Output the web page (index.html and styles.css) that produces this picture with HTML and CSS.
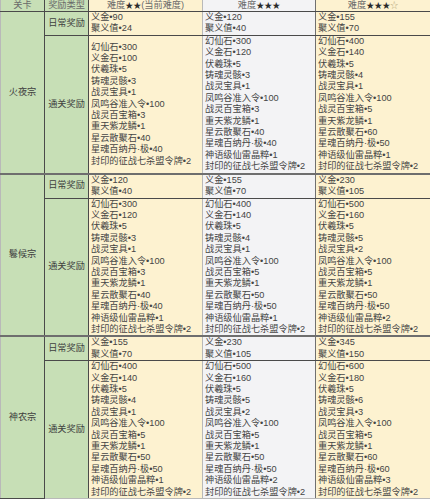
FILE: index.html
```html
<!DOCTYPE html>
<html lang="zh-CN">
<head>
<meta charset="utf-8">
<title>奖励表</title>
<link rel="stylesheet" href="styles.css">
</head>
<body>
<table class="sheet">
  <colgroup>
    <col class="c1"><col class="c2"><col class="c3"><col class="c4"><col class="c5">
  </colgroup>
  <thead>
    <tr class="head">
      <th class="g">关卡</th>
      <th class="g">奖励类型</th>
      <th class="y">难度<span class="st">★★</span>(当前难度)</th>
      <th class="w">难度<span class="st">★★★</span></th>
      <th class="y">难度<span class="st">★★★</span><span class="st2">☆</span></th>
    </tr>
  </thead>
  <tbody>
    <tr class="daily sec">
      <td class="g name" rowspan="2">火夜宗</td>
      <td class="g type">日常奖励</td>
      <td class="y">义金•90<br>聚义值•24</td>
      <td class="w">义金•120<br>聚义值•40</td>
      <td class="y">义金•155<br>聚义值•70</td>
    </tr>
    <tr class="clear">
      <td class="g type">通关奖励</td>
      <td class="y">幻仙石•300<br>义金石•100<br>伏羲珠•5<br>铸魂灵骸•3<br>战灵宝具•1<br>凤鸣谷准入令•100<br>战灵百宝箱•3<br>重天紫龙鳞•1<br>星云散聚石•40<br>星魂百纳丹·极•40<br>封印的征战七杀盟令牌•2</td>
      <td class="w">幻仙石•300<br>义金石•120<br>伏羲珠•5<br>铸魂灵骸•3<br>战灵宝具•1<br>凤鸣谷准入令•100<br>战灵百宝箱•3<br>重天紫龙鳞•1<br>星云散聚石•40<br>星魂百纳丹·极•40<br>神语级仙雷晶粹•1<br>封印的征战七杀盟令牌•2</td>
      <td class="y">幻仙石•400<br>义金石•140<br>伏羲珠•5<br>铸魂灵骸•4<br>战灵宝具•1<br>凤鸣谷准入令•100<br>战灵百宝箱•5<br>重天紫龙鳞•1<br>星云散聚石•60<br>星魂百纳丹·极•50<br>神语级仙雷晶粹•1<br>封印的征战七杀盟令牌•2</td>
    </tr>
    <tr class="daily sec">
      <td class="g name" rowspan="2">鬈候宗</td>
      <td class="g type">日常奖励</td>
      <td class="y">义金•120<br>聚义值•40</td>
      <td class="w">义金•155<br>聚义值•70</td>
      <td class="y">义金•230<br>聚义值•105</td>
    </tr>
    <tr class="clear">
      <td class="g type">通关奖励</td>
      <td class="y">幻仙石•300<br>义金石•120<br>伏羲珠•5<br>铸魂灵骸•3<br>战灵宝具•1<br>凤鸣谷准入令•100<br>战灵百宝箱•3<br>重天紫龙鳞•1<br>星云散聚石•40<br>星魂百纳丹·极•40<br>神语级仙雷晶粹•1<br>封印的征战七杀盟令牌•2</td>
      <td class="w">幻仙石•400<br>义金石•140<br>伏羲珠•5<br>铸魂灵骸•4<br>战灵宝具•1<br>凤鸣谷准入令•100<br>战灵百宝箱•5<br>重天紫龙鳞•1<br>星云散聚石•50<br>星魂百纳丹·极•50<br>神语级仙雷晶粹•1<br>封印的征战七杀盟令牌•2</td>
      <td class="y">幻仙石•500<br>义金石•160<br>伏羲珠•5<br>铸魂灵骸•5<br>战灵宝具•2<br>凤鸣谷准入令•100<br>战灵百宝箱•5<br>重天紫龙鳞•1<br>星云散聚石•50<br>星魂百纳丹·极•50<br>神语级仙雷晶粹•2<br>封印的征战七杀盟令牌•2</td>
    </tr>
    <tr class="daily sec">
      <td class="g name" rowspan="2">神农宗</td>
      <td class="g type">日常奖励</td>
      <td class="y">义金•155<br>聚义值•70</td>
      <td class="w">义金•230<br>聚义值•105</td>
      <td class="y">义金•345<br>聚义值•150</td>
    </tr>
    <tr class="clear">
      <td class="g type">通关奖励</td>
      <td class="y">幻仙石•400<br>义金石•140<br>伏羲珠•5<br>铸魂灵骸•4<br>战灵宝具•1<br>凤鸣谷准入令•100<br>战灵百宝箱•5<br>重天紫龙鳞•1<br>星云散聚石•50<br>星魂百纳丹·极•50<br>神语级仙雷晶粹•1<br>封印的征战七杀盟令牌•2</td>
      <td class="w">幻仙石•500<br>义金石•160<br>伏羲珠•5<br>铸魂灵骸•5<br>战灵宝具•2<br>凤鸣谷准入令•100<br>战灵百宝箱•5<br>重天紫龙鳞•1<br>星云散聚石•50<br>星魂百纳丹·极•50<br>神语级仙雷晶粹•2<br>封印的征战七杀盟令牌•2</td>
      <td class="y">幻仙石•600<br>义金石•180<br>伏羲珠•5<br>铸魂灵骸•6<br>战灵宝具•3<br>凤鸣谷准入令•100<br>战灵百宝箱•5<br>重天紫龙鳞•1<br>星云散聚石•60<br>星魂百纳丹·极•60<br>神语级仙雷晶粹•3<br>封印的征战七杀盟令牌•2</td>
    </tr>
  </tbody>
</table>
</body>
</html>
```
FILE: styles.css
```css
html, body {
  margin: 0;
  padding: 0;
  background: #ffffff;
}
body {
  width: 430px;
  height: 500px;
  overflow: hidden;
  font-family: "Liberation Sans", "Noto Sans CJK SC", sans-serif;
  font-size: 9.2px;
  color: #454545;
}
.sheet {
  border-collapse: collapse;
  table-layout: fixed;
  width: 430px;
}
.c1 { width: 44px; }
.c2 { width: 44px; }
.c3 { width: 114px; }
.c4 { width: 113px; }
.c5 { width: 115px; }

.sheet th, .sheet td {
  padding: 0 2px;
  line-height: 11.4px;
  vertical-align: middle;
  text-align: left;
  white-space: nowrap;
  overflow: hidden;
  border: 1px solid #b9b9b9;
}
.sheet th {
  height: 11px;
  line-height: 11px;
  padding-top: 0;
  padding-bottom: 0;
  font-weight: normal;
  text-align: center;
  color: #6a6a6a;
  border-top: 0;
  border-bottom: 1px solid #4a4a4a;
}
.st { color: #2a2a2a; font-size: 8px; }
.st2 { color: #b8a878; font-size: 8px; }

.g { background: #c7dfb6; }
.y { background: #fdf2d0; }
.w { background: #f3f3f5; }

.name, .type {
  text-align: center !important;
  color: #3f3f3f;
}
.sheet td.g, .sheet th.g { border-right: 1px solid #4a4a4a; }
.sheet td.w, .sheet th.w { border-right: 1px solid #707070; }

.daily td { border-bottom: 1px solid #4a4a4a; }
.sec td { border-top: 2px solid #6e6e6e; }
.sheet thead + tbody tr:first-child td { border-top: 1px solid #4a4a4a; }
```
